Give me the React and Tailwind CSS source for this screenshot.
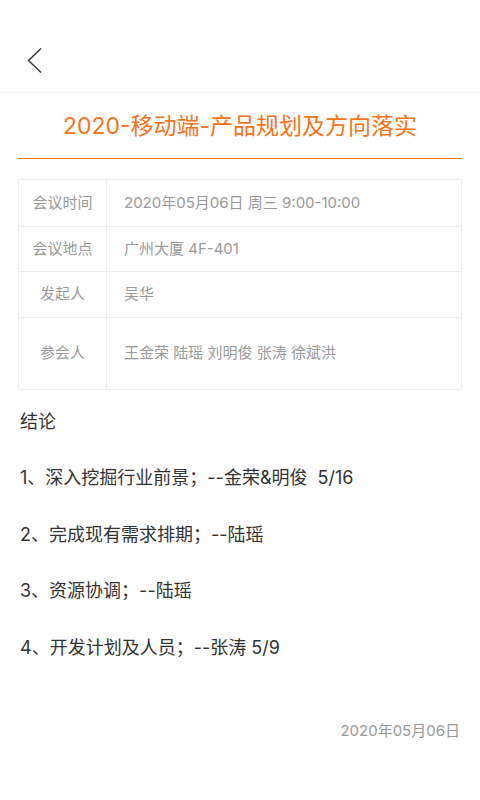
import React from "react";

const info = [
  { label: "会议时间", value: "2020年05月06日 周三 9:00-10:00", h: "h-[46px]" },
  { label: "会议地点", value: "广州大厦 4F-401", h: "h-[45px]" },
  { label: "发起人", value: "吴华", h: "h-[46px]" },
  { label: "参会人", value: "王金荣 陆瑶 刘明俊 张涛 徐斌洪", h: "h-[72px]" },
];

const conclusions = [
  "1、深入挖掘行业前景；--金荣&明俊\u00a0\u00a05/16",
  "2、完成现有需求排期；--陆瑶",
  "3、资源协调；--陆瑶",
  "4、开发计划及人员；--张涛 5/9",
];

export default function App() {
  return (
    <div
      className="w-[480px] min-h-[800px] bg-white"
      style={{ fontFamily: 'Inter, "Noto Sans CJK SC", sans-serif' }}
    >
      {/* 顶部导航 */}
      <div className="h-[93px] flex items-start pt-[48px] pl-[27px] border-b border-[#f7f7f7]">
        <svg width="16" height="25" viewBox="0 0 16 25" fill="none">
          <polyline
            points="14,0.5 1.5,12.5 14,24.5"
            stroke="#333"
            strokeWidth="1.4"
            strokeLinejoin="miter"
          />
        </svg>
      </div>

      {/* 标题 */}
      <div className="mx-[18px] pt-[18px] pb-[17px] border-b border-[#f6731c] text-center">
        <h1 className="text-[23px] leading-[30px] text-[#f6731c] font-normal">
          2020-移动端-产品规划及方向落实
        </h1>
      </div>

      {/* 会议信息表格 */}
      <div className="mx-[18px] mt-[20px] border border-[#ececec]">
        {info.map((row, i) => (
          <div
            key={row.label}
            className={`flex ${row.h} ${i > 0 ? "border-t border-[#ececec]" : ""}`}
          >
            <div className="w-[88px] shrink-0 flex items-center justify-center border-r border-[#ececec] text-[15px] text-[#9a9a9a]">
              {row.label}
            </div>
            <div className="flex-1 flex items-center pl-[17px] text-[15px] text-[#9a9a9a]">
              {row.value}
            </div>
          </div>
        ))}
      </div>

      {/* 结论 */}
      <div className="px-[20px] mt-[20px]">
        <div className="text-[18px] leading-[24px] text-[#333]">结论</div>
        <div className="mt-[32px] flex flex-col gap-[32.5px]">
          {conclusions.map((c) => (
            <div key={c} className="text-[18px] leading-[24px] text-[#333]">
              {c}
            </div>
          ))}
        </div>
        <div className="mt-[61px] text-right text-[15px] leading-[20px] text-[#999]">
          2020年05月06日
        </div>
      </div>
    </div>
  );
}
